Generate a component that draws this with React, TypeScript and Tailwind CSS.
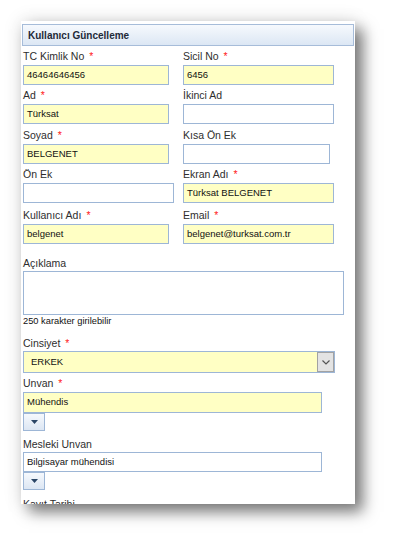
import React from 'react';

const FONT = { fontFamily: '"Liberation Sans", Arial, sans-serif' };

type FieldProps = {
  label: string;
  required?: boolean;
  value?: string;
  width: string;
  filled?: boolean;
};

const Label: React.FC<{ text: string; required?: boolean }> = ({ text, required }) => (
  <div className="h-[13px] leading-[13px] text-[10.5px] text-[#2e2e2e] whitespace-nowrap">
    {text}
    {required && <span className="ml-[5px] text-[#ff1a1a]">*</span>}
  </div>
);

const Field: React.FC<FieldProps> = ({ label, required, value, width, filled }) => (
  <div className="flex flex-col">
    <Label text={label} required={required} />
    <div
      className={`${width} mt-[2px] h-[20px] border border-[#9db6d6] pl-[3px] flex items-center text-[9.5px] text-[#111] ${
        filled ? 'bg-[#ffffc4]' : 'bg-white'
      }`}
    >
      {value}
    </div>
  </div>
);

const DropButton: React.FC = () => (
  <div className="w-[22px] h-[18px] border border-[#9db6d6] bg-gradient-to-b from-[#f6f9fd] to-[#dce6f3] flex items-center justify-center">
    <svg width="7" height="4" viewBox="0 0 7 4">
      <polygon points="0,0 7,0 3.5,4" fill="#2a4566" />
    </svg>
  </div>
);

export default function App() {
  return (
    <div className="min-h-[546px] bg-white pt-[21px] pl-[21px]" style={FONT}>
      <div className="w-[334px] h-[483px] overflow-hidden bg-white pt-[3px] px-[1px] shadow-[8px_8px_14px_rgba(0,0,0,0.5),0_0_18px_rgba(0,0,0,0.12)]">
        <div className="h-[22px] border border-[#a6bcd9] bg-gradient-to-b from-[#f6f9fd] to-[#dce7f4] pl-[5px] flex items-center text-[10px] font-bold text-[#1f2a38]">
          Kullanıcı Güncelleme
        </div>

        <div className="pl-[1px] pt-[4px]">
          {/* two column fields */}
          <div className="grid grid-cols-[160px_1fr]">
            <Field label="TC Kimlik No" required value="46464646456" width="w-[146px]" filled />
            <Field label="Sicil No" required value="6456" width="w-[151px]" filled />
          </div>
          <div className="grid grid-cols-[160px_1fr] mt-[4px]">
            <Field label="Ad" required value="Türksat" width="w-[146px]" filled />
            <Field label="İkinci Ad" width="w-[151px]" />
          </div>
          <div className="grid grid-cols-[160px_1fr] mt-[5px]">
            <Field label="Soyad" required value="BELGENET" width="w-[146px]" filled />
            <Field label="Kısa Ön Ek" width="w-[147px]" />
          </div>
          <div className="grid grid-cols-[160px_1fr] mt-[4px]">
            <Field label="Ön Ek" width="w-[151px]" />
            <Field label="Ekran Adı" required value="Türksat BELGENET" width="w-[151px]" filled />
          </div>
          <div className="grid grid-cols-[160px_1fr] mt-[6px]">
            <Field label="Kullanıcı Adı" required value="belgenet" width="w-[146px]" filled />
            <Field label="Email" required value="belgenet@turksat.com.tr" width="w-[151px]" filled />
          </div>

          <div className="mt-[13px]">
            <Label text="Açıklama" />
          </div>
          <div className="mt-[1px] w-[321px] h-[44px] border border-[#9db6d6] bg-white" />
          <div className="h-[12px] leading-[12px] text-[9.3px] text-[#111]">250 karakter girilebilir</div>

          <div className="mt-[10px]">
            <Label text="Cinsiyet" required />
          </div>
          <div className="mt-[1px] w-[312px] h-[22px] border border-[#9db6d6] bg-[#ffffc4] flex items-center">
            <div className="flex-1 pl-[7px] text-[9.5px] text-[#111]">ERKEK</div>
            <div className="w-[17px] h-[20px] border border-[#a2a2a2] bg-[#e3e3e3] flex items-center justify-center">
              <svg width="8" height="5" viewBox="0 0 8 5">
                <polyline points="0.5,0.5 4,4 7.5,0.5" fill="none" stroke="#555" strokeWidth="1.2" />
              </svg>
            </div>
          </div>

          <div className="mt-[4px]">
            <Label text="Unvan" required />
          </div>
          <div className="mt-[2px] w-[299px] h-[21px] border border-[#9db6d6] bg-[#ffffc4] pl-[3px] flex items-center text-[9.5px] text-[#111]">
            Mühendis
          </div>
          <DropButton />

          <div className="mt-[7px]">
            <Label text="Mesleki Unvan" />
          </div>
          <div className="mt-[1px] w-[299px] h-[20px] border border-[#9db6d6] bg-white pl-[3px] flex items-center text-[9.5px] text-[#111]">
            Bilgisayar mühendisi
          </div>
          <DropButton />

          <div className="mt-[8px]">
            <Label text="Kayıt Tarihi" />
          </div>
        </div>
      </div>
    </div>
  );
}
